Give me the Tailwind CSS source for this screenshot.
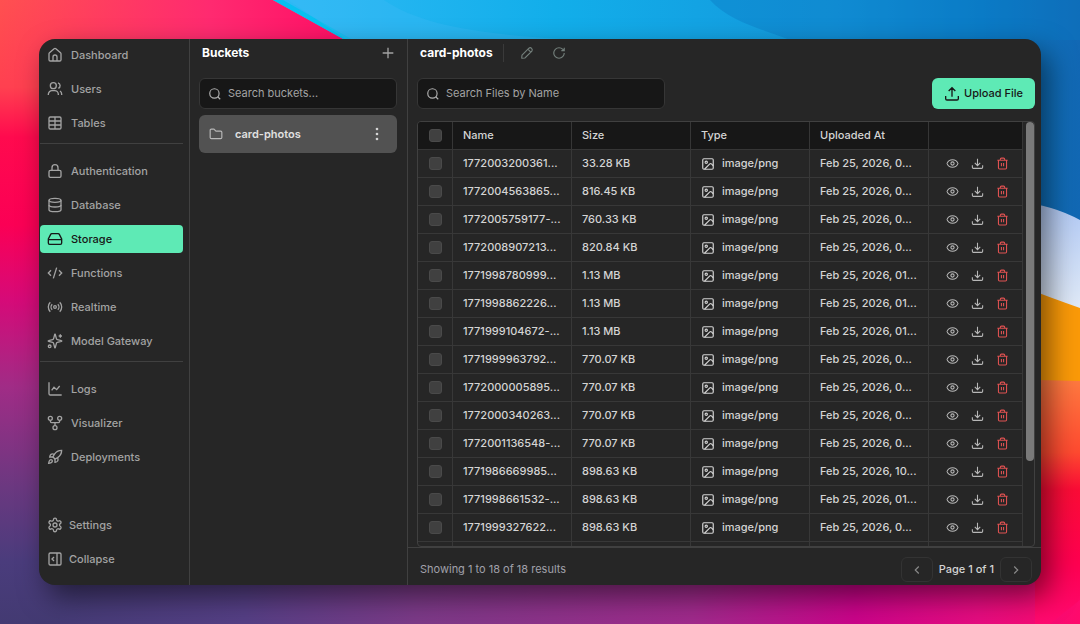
<!doctype html>
<html lang="en">
  <head>
    <meta charset="UTF-8" />
    <meta name="viewport" content="width=device-width, initial-scale=1.0" />
    <title>Storage - card-photos</title>
    <script src="https://cdn.jsdelivr.net/npm/@tailwindcss/browser@4"></script>
  </head>

  <body
    class="relative flex h-screen overflow-hidden bg-[#e0006e] p-[39px] font-['Inter',sans-serif] text-[11px] font-medium text-[#d4d4d4]"
  >
    <!-- icon sprite -->
    <svg class="hidden" aria-hidden="true">
      <symbol id="home" viewBox="0 0 24 24"><path d="M9 21v-6a3 3 0 0 1 6 0v6" /><path d="M3 10.2a2 2 0 0 1 .7-1.5l7-6a2 2 0 0 1 2.6 0l7 6a2 2 0 0 1 .7 1.5V19a2 2 0 0 1-2 2H5a2 2 0 0 1-2-2z" /></symbol>
      <symbol id="users" viewBox="0 0 24 24"><circle cx="9.5" cy="7" r="4.5" /><path d="M17 21v-1a5.500 5.500 0 0 0-5.500-5.500h-4A5.500 5.500 0 0 0 2 20v1" /><path d="M16.500 2.800a4.500 4.500 0 0 1 .5 8.400" /><path d="M22 21v-1.500a5.500 5.500 0 0 0-2.500-4.500" /></symbol>
      <symbol id="table" viewBox="0 0 24 24"><rect x="3" y="3" width="18" height="18" rx="2" /><path d="M12 3v18M3 9h18M3 15h18" /></symbol>
      <symbol id="lock" viewBox="0 0 24 24"><rect x="3" y="11" width="18" height="10.5" rx="2" /><path d="M7.500 11V7a4.500 4.500 0 0 1 9 0v4" /></symbol>
      <symbol id="database" viewBox="0 0 24 24"><ellipse cx="12" cy="5" rx="9" ry="3" /><path d="M3 5v14a9 3 0 0 0 18 0V5" /><path d="M3 12a9 3 0 0 0 18 0" /></symbol>
      <symbol id="drive" viewBox="0 0 24 24"><path d="M22 13H2" /><path d="M5.5 5.1 2 12v6a2 2 0 0 0 2 2h16a2 2 0 0 0 2-2v-6l-3.5-6.9A2 2 0 0 0 16.8 4H7.2a2 2 0 0 0-1.7 1.1z" /><path d="M6 16.5h.01M10 16.5h.01" /></symbol>
      <symbol id="code" viewBox="0 0 24 24"><path d="m18 16 4-4-4-4M6 8l-4 4 4 4M14.5 4l-5 16" /></symbol>
      <symbol id="radio" viewBox="0 0 24 24"><path d="M4.9 19.1C1 15.2 1 8.8 4.9 4.9M7.8 16.2a6 6 0 0 1 0-8.4M16.2 7.8a6 6 0 0 1 0 8.4M19.1 4.9C23 8.8 23 15.1 19.1 19" /><circle cx="12" cy="12" r="2" /></symbol>
      <symbol id="sparkles" viewBox="0 0 24 24"><path d="M9.9 15.5A2 2 0 0 0 8.5 14.1l-6.1-1.6a.5.5 0 0 1 0-1L8.5 9.9A2 2 0 0 0 9.9 8.5l1.6-6.1a.5.5 0 0 1 1 0l1.6 6.1a2 2 0 0 0 1.4 1.4l6.1 1.6a.5.5 0 0 1 0 1l-6.1 1.6a2 2 0 0 0-1.4 1.4l-1.6 6.1a.5.5 0 0 1-1 0z" /><path d="M20 2v5M22.500 4.500h-5" /><circle cx="4" cy="20" r="2" /></symbol>
      <symbol id="chart" viewBox="0 0 24 24"><path d="M3 2v17a2 2 0 0 0 2 2h17" /><path d="m7 14 3.500-4.500 4 3.500 4.500-5.500" /></symbol>
      <symbol id="fork" viewBox="0 0 24 24"><circle cx="5" cy="5" r="3" /><circle cx="19" cy="5" r="3" /><circle cx="12" cy="19" r="3" /><path d="M5 8v1.500a2 2 0 0 0 2 2h10a2 2 0 0 0 2-2V8M12 11.500V16" /></symbol>
      <symbol id="rocket" viewBox="0 0 24 24"><path d="M4.500 16.500c-1.500 1.300-2 5-2 5s3.700-.5 5-2c.7-.8.7-2.100-.1-2.900a2.200 2.200 0 0 0-2.900-.1z" /><path d="m12 15-3-3a22 22 0 0 1 2-4A12.900 12.900 0 0 1 22 2c0 2.700-.8 7.500-6 11a22.400 22.400 0 0 1-4 2z" /><path d="M9 12H4s.5-3 2-4c1.600-1.100 5 0 5 0M12 15v5s3-.5 4-2c1.100-1.600 0-5 0-5" /></symbol>
      <symbol id="gear" viewBox="0 0 24 24"><path d="M9.700 4.100a2.300 2.300 0 0 1 4.600 0 2.300 2.300 0 0 0 3.300 1.900 2.300 2.300 0 0 1 2.300 4 2.300 2.300 0 0 0 0 3.900 2.300 2.300 0 0 1-2.300 4 2.300 2.300 0 0 0-3.300 1.900 2.300 2.300 0 0 1-4.600 0 2.300 2.300 0 0 0-3.300-1.900 2.300 2.300 0 0 1-2.300-4 2.300 2.300 0 0 0 0-3.900A2.300 2.300 0 0 1 6.400 6a2.300 2.300 0 0 0 3.300-1.900" /><circle cx="12" cy="12" r="3" /></symbol>
      <symbol id="collapse" viewBox="0 0 24 24"><rect x="3" y="3" width="18" height="18" rx="2" /><path d="M15 3v18M10.500 9l-3 3 3 3" /></symbol>
      <symbol id="plus" viewBox="0 0 24 24"><path d="M4 12h16M12 4v16" /></symbol>
      <symbol id="search" viewBox="0 0 24 24"><circle cx="11" cy="11" r="8" /><path d="m21 21-4.300-4.300" /></symbol>
      <symbol id="folder" viewBox="0 0 24 24"><path d="M20 20a2 2 0 0 0 2-2V9a2 2 0 0 0-2-2h-7.500a2 2 0 0 1-1.600-.9L9.500 4.400A2 2 0 0 0 8 3.500H4a2 2 0 0 0-2 2V18a2 2 0 0 0 2 2z" /></symbol>
      <symbol id="dots" viewBox="0 0 24 24"><g fill="currentColor" stroke="none"><circle cx="12" cy="4.500" r="2" /><circle cx="12" cy="12" r="2" /><circle cx="12" cy="19.500" r="2" /></g></symbol>
      <symbol id="pencil" viewBox="0 0 24 24"><path d="M3.500 15.500 15.300 3.700a3.600 3.600 0 0 1 5 5L8.500 20.500 3.500 21a.5.5 0 0 1-.6-.6zM13.500 5.500l5 5" /></symbol>
      <symbol id="refresh" viewBox="0 0 24 24"><path d="M21 12a9 9 0 1 1-9-9c2.500 0 4.900 1 6.700 2.700L21 8M21 3v5h-5" /></symbol>
      <symbol id="upload" viewBox="0 0 24 24"><path d="M12 16V2.500M7 7.500l5-5 5 5M2.500 15v4a2 2 0 0 0 2 2h15a2 2 0 0 0 2-2v-4" /></symbol>
      <symbol id="image" viewBox="0 0 24 24"><rect x="3" y="3" width="18" height="18" rx="2" /><circle cx="9" cy="9" r="2" /><path d="m21 15-3.100-3.100a2 2 0 0 0-2.800 0L6 21" /></symbol>
      <symbol id="eye" viewBox="0 0 24 24"><path d="M2 12.300a1 1 0 0 1 0-.6 10.800 10.800 0 0 1 20 0 1 1 0 0 1 0 .6 10.800 10.800 0 0 1-20 0" /><circle cx="12" cy="12" r="3" /></symbol>
      <symbol id="download" viewBox="0 0 24 24"><path d="M12 3v13M7 11l5 5 5-5M2.500 15v4a2 2 0 0 0 2 2h15a2 2 0 0 0 2-2v-4" /></symbol>
      <symbol id="trash" viewBox="0 0 24 24"><path d="M2.500 6h19M19.500 6v14a2 2 0 0 1-2 2h-11a2 2 0 0 1-2-2V6M8 6V4a2 2 0 0 1 2-2h4a2 2 0 0 1 2 2v2M10 11v6M14 11v6" /></symbol>
      <symbol id="left" viewBox="0 0 24 24"><path d="m15 18-6-6 6-6" /></symbol>
      <symbol id="right" viewBox="0 0 24 24"><path d="m9 18 6-6-6-6" /></symbol>
    </svg>

    <!-- wallpaper -->
    <svg class="absolute inset-0 size-full" viewBox="0 0 1080 624" preserveAspectRatio="none" aria-hidden="true">
      <defs>
        <linearGradient id="bg-left" x1="0" y1="0" x2="0" y2="1">
          <stop offset="0" stop-color="#ff5050" />
          <stop offset=".14" stop-color="#ff4050" />
          <stop offset=".22" stop-color="#ff0a4e" />
          <stop offset=".36" stop-color="#fb0055" />
          <stop offset=".48" stop-color="#d60a78" />
          <stop offset=".62" stop-color="#a02c86" />
          <stop offset=".78" stop-color="#6b3880" />
          <stop offset=".9" stop-color="#4a3c7c" />
          <stop offset="1" stop-color="#433a72" />
        </linearGradient>
        <linearGradient id="bg-pink" x1="0" y1="0" x2="1" y2="0">
          <stop offset="0" stop-color="#ff2a70" stop-opacity="0" />
          <stop offset=".5" stop-color="#ff2a70" />
          <stop offset="1" stop-color="#ff0060" />
        </linearGradient>
        <linearGradient id="bg-bottom" x1="0" y1="0" x2="1" y2="0">
          <stop offset="0" stop-color="#453b76" />
          <stop offset=".18" stop-color="#553f85" />
          <stop offset=".35" stop-color="#7c3a88" />
          <stop offset=".62" stop-color="#a02a8c" />
          <stop offset=".78" stop-color="#cb048a" />
          <stop offset=".9" stop-color="#e60c80" />
          <stop offset="1" stop-color="#ff0a6c" />
        </linearGradient>
        <linearGradient id="bg-blue" x1="0" y1="0" x2="1" y2="0">
          <stop offset="0" stop-color="#2fbaf5" />
          <stop offset=".35" stop-color="#12aeea" />
          <stop offset=".7" stop-color="#1498dc" />
          <stop offset=".88" stop-color="#0b7dc8" />
          <stop offset="1" stop-color="#1268b4" />
        </linearGradient>
        <linearGradient id="bg-white" x1="0" y1="0" x2="0" y2="1">
          <stop offset="0" stop-color="#b0c8f4" />
          <stop offset="1" stop-color="#e6eef8" />
        </linearGradient>
        <linearGradient id="bg-red" x1="0" y1="0" x2="0" y2="1">
          <stop offset="0" stop-color="#ff7a40" />
          <stop offset=".3" stop-color="#ff4a30" />
          <stop offset=".45" stop-color="#fb0c36" />
          <stop offset=".75" stop-color="#ff0050" />
          <stop offset="1" stop-color="#ff0a70" />
        </linearGradient>
      </defs>
      <rect width="540" height="624" fill="url(#bg-left)" />
      <path d="M0 0H273L420 80H0z" fill="url(#bg-pink)" />
      <rect x="60" y="540" width="1020" height="84" fill="url(#bg-bottom)" />
      <path d="M273 0H1080V260H620L345 40z" fill="url(#bg-blue)" />
      <path d="M273 0h10l70 40h-8z" fill="#08c0f0" />
      <path d="M384 0C420 25 480 34 560 39H345L288 0z" fill="#46bdf6" opacity=".25" />
      <path d="M710 0C730 22 760 28 790 40H1080V0z" fill="#0a78c4" opacity=".4" />
      <path d="M1000 200Q1048 202 1080 220V320H1000z" fill="url(#bg-white)" />
      <path d="M1000 278Q1045 296 1080 308V390H1000z" fill="#fb9a08" />
      <path d="M1000 379L1080 381V600L1050 624H1035V540H1000z" fill="url(#bg-red)" />
    </svg>

    <div
      class="relative flex min-w-0 flex-1 overflow-hidden rounded-2xl bg-[#262626] shadow-[8px_12px_28px_rgba(0,0,0,0.5)]"
    >
      <aside class="flex w-[151px] shrink-0 flex-col border-r border-[#404040] pt-0.5 pr-1.5 pb-3 pl-px text-[#a3a3a3]">
        <nav id="nav" class="flex flex-col gap-1.5"></nav>
        <div id="nav-bottom" class="mt-auto flex flex-col gap-1.5"></div>
      </aside>

      <section class="flex w-[218px] shrink-0 flex-col border-r border-[#404040] pr-2.5 pl-[9px]">
        <div class="flex h-7 items-center justify-between pl-[3px] text-white">
          <h2 class="text-xs font-bold">Buckets</h2>
          <button class="flex size-[18px] items-center justify-center text-[#a3a3a3]" aria-label="New bucket">
            <svg class="size-4 fill-none stroke-current stroke-2"><use href="#plus" /></svg>
          </button>
        </div>
        <label class="mt-[11px] flex h-[31px] items-center gap-1.5 rounded-md border border-[#363636] bg-[#171717] px-2">
          <svg class="size-3.5 shrink-0 fill-none stroke-[#b0b0b0] stroke-2"><use href="#search" /></svg>
          <input
            type="text"
            placeholder="Search buckets..."
            aria-label="Search buckets"
            class="w-full min-w-0 font-normal outline-none placeholder:text-[#a3a3a3]"
          />
        </label>
        <div class="mt-1.5 flex h-[38px] items-center rounded-md bg-[#525252] pr-3 pl-2.5">
          <svg class="size-3.5 shrink-0 fill-none stroke-[#b8b8b8] stroke-2"><use href="#folder" /></svg>
          <a href="#card-photos" class="ml-3 flex-1 font-semibold text-[#e0e0e0]">card-photos</a>
          <button class="text-[#d4d4d4]" aria-label="Bucket options">
            <svg class="size-4 fill-none stroke-current"><use href="#dots" /></svg>
          </button>
        </div>
      </section>

      <main class="flex min-w-0 flex-1 flex-col">
        <div class="flex h-7 items-center pl-3">
          <h1 class="text-xs font-bold text-white">card-photos</h1>
          <div class="ml-2.5 h-[18px] w-px bg-[#3a3a3a]"></div>
          <button class="ml-4 text-[#737f7b]" aria-label="Edit bucket">
            <svg class="size-3.5 fill-none stroke-current stroke-2"><use href="#pencil" /></svg>
          </button>
          <button class="ml-[18px] text-[#737f7b]" aria-label="Refresh">
            <svg class="size-3.5 fill-none stroke-current stroke-2"><use href="#refresh" /></svg>
          </button>
        </div>

        <div class="mt-[11px] flex justify-between pr-1.5 pl-[9px]">
          <label class="flex h-[31px] w-[248px] items-center gap-1.5 rounded-md border border-[#363636] bg-[#171717] px-2">
            <svg class="size-3.5 shrink-0 fill-none stroke-[#b0b0b0] stroke-2"><use href="#search" /></svg>
            <input
              type="text"
              placeholder="Search Files by Name"
              aria-label="Search Files by Name"
              class="w-full min-w-0 font-normal outline-none placeholder:text-[#a3a3a3]"
            />
          </label>
          <button class="flex h-[31px] items-center gap-1 rounded-md bg-[#5eeab5] px-3 text-[#171717]">
            <svg class="size-4 fill-none stroke-current stroke-2"><use href="#upload" /></svg>
            Upload File
          </button>
        </div>

        <div
          class="mt-3 mr-1.5 ml-[9px] flex min-h-0 flex-1 items-start overflow-hidden rounded-sm border border-[#404040]"
        >
          <div class="min-w-0 flex-1">
            <table class="w-full table-fixed border-separate border-spacing-0 text-left">
              <colgroup>
                <col class="w-[35px]" />
                <col />
                <col />
                <col />
                <col />
                <col class="w-[94px]" />
              </colgroup>
              <thead class="bg-[#171717]">
                <tr class="h-7 *:border-r *:border-b *:border-[#363636] *:p-0 *:font-medium">
                  <th>
                    <input
                      type="checkbox"
                      aria-label="Select all files"
                      class="mx-auto block size-[13px] appearance-none rounded-[3px] border border-[#4a4a4a] bg-[#404040]"
                    />
                  </th>
                  <th><span class="pl-2.5">Name</span></th>
                  <th><span class="pl-2.5">Size</span></th>
                  <th><span class="pl-2.5">Type</span></th>
                  <th><span class="pl-2.5">Uploaded At</span></th>
                  <th aria-label="Actions"></th>
                </tr>
              </thead>
              <tbody id="files"></tbody>
            </table>
          </div>
          <div class="ml-[3px] h-4/5 w-2 shrink-0 rounded-full bg-[#7a7a7a]"></div>
        </div>

        <footer class="flex h-[38px] shrink-0 items-center justify-between border-t border-[#404040] pt-1.5 pr-[9px] pl-3">
          <p class="font-normal text-[#a1a1aa]">Showing 1 to 18 of 18 results</p>
          <div class="flex items-center gap-1.5">
            <button
              class="flex h-[25px] w-8 items-center justify-center rounded-md border border-[#333333] text-[#8a8a8a]"
              aria-label="Previous page"
            >
              <svg class="size-3.5 fill-none stroke-current stroke-2"><use href="#left" /></svg>
            </button>
            Page 1 of 1
            <button
              class="flex h-[25px] w-8 items-center justify-center rounded-md border border-[#333333] text-[#8a8a8a]"
              aria-label="Next page"
            >
              <svg class="size-3.5 fill-none stroke-current stroke-2"><use href="#right" /></svg>
            </button>
          </div>
        </footer>
      </main>
    </div>

    <script>
      // null makes a divider
      const nav = [
        ['home', 'Dashboard'],
        ['users', 'Users'],
        ['table', 'Tables'],
        null,
        ['lock', 'Authentication'],
        ['database', 'Database'],
        ['drive', 'Storage'],
        ['code', 'Functions'],
        ['radio', 'Realtime'],
        ['sparkles', 'Model Gateway'],
        null,
        ['chart', 'Logs'],
        ['fork', 'Visualizer'],
        ['rocket', 'Deployments'],
      ]

      const files = [
        ['1772003200361...', '33.28 KB', '0...'],
        ['1772004563865...', '816.45 KB', '0...'],
        ['1772005759177-...', '760.33 KB', '0...'],
        ['1772008907213...', '820.84 KB', '0...'],
        ['1771998780999...', '1.13 MB', '01...'],
        ['1771998862226...', '1.13 MB', '01...'],
        ['1771999104672-...', '1.13 MB', '01...'],
        ['1771999963792...', '770.07 KB', '0...'],
        ['1772000005895...', '770.07 KB', '0...'],
        ['1772000340263...', '770.07 KB', '0...'],
        ['1772001136548-...', '770.07 KB', '0...'],
        ['1771986669985...', '898.63 KB', '10...'],
        ['1771998661532-...', '898.63 KB', '01...'],
        ['1771999327622...', '898.63 KB', '0...'],
      ]

      const link = (icon, label, extra) => `
        <a href="#${label.toLowerCase()}" class="flex h-7 items-center rounded-sm pl-[7px] ${extra}">
          <svg class="size-4 fill-none stroke-current stroke-2"><use href="#${icon}" /></svg>${label}
        </a>`

      document.getElementById('nav').innerHTML = nav
        .map((item) =>
          item
            ? link(item[0], item[1], item[1] === 'Storage' ? 'gap-2 bg-[#5eeab5] text-[#171717]' : 'gap-2')
            : '<hr class="mb-[7px] border-[#404040]" />'
        )
        .join('')

      document.getElementById('nav-bottom').innerHTML =
        link('gear', 'Settings', 'gap-1.5') + link('collapse', 'Collapse', 'gap-1.5')

      const action = (icon, label, color) => `
        <button class="flex w-[25px] justify-center ${color}" aria-label="${label}">
          <svg class="size-[13px] fill-none stroke-current stroke-2"><use href="#${icon}" /></svg>
        </button>`

      const row = ([name, size, time]) => `
        <tr class="h-7 *:border-r *:border-b *:border-[#383838] *:p-0 *:whitespace-nowrap">
          <td>
            <input type="checkbox" aria-label="Select ${name}" class="mx-auto block size-[13px] appearance-none rounded-[3px] border border-[#4a4a4a] bg-[#404040]" />
          </td>
          <td><span class="pl-2.5">${name}</span></td>
          <td><span class="pl-2.5">${size}</span></td>
          <td>
            <span class="flex items-center gap-[7px] pl-2.5">
              <svg class="size-3.5 fill-none stroke-current stroke-2"><use href="#image" /></svg>image/png
            </span>
          </td>
          <td><span class="pl-2.5">Feb 25, 2026, ${time}</span></td>
          <td>
            <div class="flex pl-[11px]">
              ${action('eye', 'View', 'text-[#b8b8b8]')}
              ${action('download', 'Download', 'text-[#b8b8b8]')}
              ${action('trash', 'Delete', 'text-[#e05252]')}
            </div>
          </td>
        </tr>`

      // the last row is cut off by the scroll area
      document.getElementById('files').innerHTML =
        files.map(row).join('') +
        '<tr class="h-7 *:border-r *:border-[#383838] *:p-0">' + '<td></td>'.repeat(6) + '</tr>'
    </script>
  </body>
</html>
